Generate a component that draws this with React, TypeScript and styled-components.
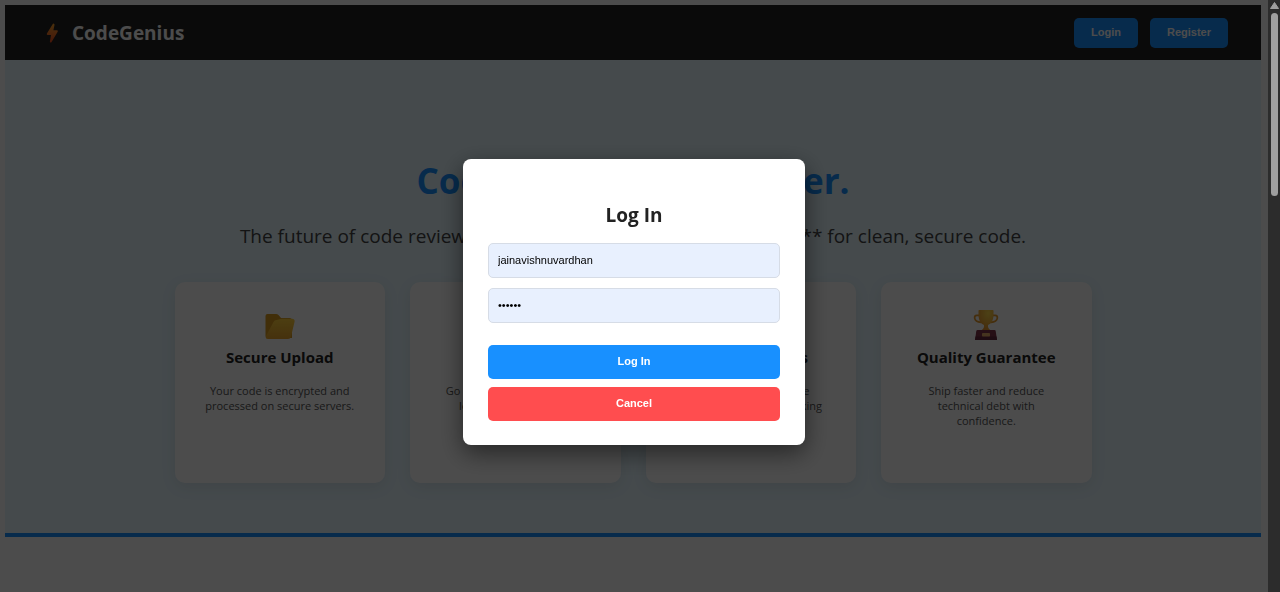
import React from "react";
import styled, { createGlobalStyle } from "styled-components";

const GlobalStyle = createGlobalStyle`
  * { box-sizing: border-box; }
  body {
    margin: 0;
    background: #ffffff;
    color: #222222;
    font-family: "Segoe UI", "Open Sans", "Noto Sans", sans-serif;
  }
  h1, h2, h3, p { margin: 0; }
`;

const BLUE = "#1890ff";

const Shell = styled.div`
  display: flex;
  min-height: 100vh;
`;

const Page = styled.div`
  flex: 1;
  min-width: 0;
  padding: 5px 7px 0 5px;
`;

const Header = styled.header`
  display: flex;
  align-items: center;
  justify-content: space-between;
  height: 55px;
  padding: 0 33px 0 40px;
  background: #222222;
`;

const Brand = styled.a`
  display: flex;
  align-items: center;
  gap: 12px;
  color: #ffffff;
  font-size: 19px;
  font-weight: 700;
  line-height: 28px;
  text-decoration: none;
`;

const Nav = styled.nav`
  display: flex;
  gap: 12px;
`;

const Button = styled.button<{ $tone?: "danger"; $block?: boolean }>`
  width: ${(p) => (p.$block ? "100%" : "auto")};
  height: ${(p) => (p.$block ? "34px" : "30px")};
  padding: 0 17px 2px;
  border: 0;
  border-radius: 5px;
  background: ${(p) => (p.$tone === "danger" ? "#ff4d4f" : BLUE)};
  color: #ffffff;
  font-family: "Liberation Sans", Arial, sans-serif;
  font-size: 11px;
  font-weight: 700;
  cursor: pointer;
`;

const Hero = styled.section`
  padding: 96px 40px 50px;
  border-bottom: 4px solid ${BLUE};
  background: #e6f7ff;
  text-align: center;
`;

const Title = styled.h1`
  color: ${BLUE};
  font-size: 35px;
  font-weight: 700;
  line-height: 50px;
`;

const Subtitle = styled.p`
  margin-top: 16px;
  color: #444444;
  font-size: 19px;
  line-height: 28px;
  white-space: nowrap;
`;

const Cards = styled.div`
  display: grid;
  grid-template-columns: repeat(4, 1fr);
  gap: 25px;
  max-width: 917px;
  margin: 32px auto 0;
`;

const Card = styled.article`
  display: flex;
  flex-direction: column;
  align-items: center;
  min-height: 201px;
  padding: 25px 28px;
  border-radius: 10px;
  background: #ffffff;
  box-shadow: 0 4px 16px rgba(0, 0, 0, 0.08);
`;

const CardTitle = styled.h3`
  margin-top: 4px;
  font-size: 15px;
  font-weight: 700;
  line-height: 24px;
  white-space: nowrap;
`;

const CardText = styled.p`
  margin-top: 14px;
  color: #555555;
  font-size: 11px;
  line-height: 15px;
`;

const Backdrop = styled.div`
  position: fixed;
  inset: 0 12px 0 0;
  display: flex;
  align-items: center;
  justify-content: center;
  padding-top: 12px;
  background: rgba(0, 0, 0, 0.7);
`;

const Dialog = styled.form`
  display: flex;
  flex-direction: column;
  width: 342px;
  padding: 40px 25px 24px;
  border-radius: 8px;
  background: #ffffff;
  box-shadow: 0 8px 24px rgba(0, 0, 0, 0.5);
`;

const DialogTitle = styled.h2`
  margin-bottom: 12px;
  font-size: 19px;
  font-weight: 700;
  line-height: 32px;
  text-align: center;
`;

const Field = styled.input`
  width: 100%;
  height: 35px;
  margin-bottom: 10px;
  padding: 0 9px 2px;
  border: 1px solid #d6dce6;
  border-radius: 5px;
  background: #e8f0fe;
  color: #000000;
  font-family: "Liberation Sans", Arial, sans-serif;
  font-size: 11px;
`;

const Actions = styled.div`
  display: flex;
  flex-direction: column;
  gap: 8px;
  margin-top: 12px;
`;

const ScrollTrack = styled.div`
  position: sticky;
  top: 0;
  display: flex;
  flex-direction: column;
  align-items: center;
  gap: 4px;
  width: 12px;
  height: 100vh;
  padding: 2px 0 0 1px;
  background: #2c2c2c;
`;

const ScrollThumb = styled.div`
  width: 7px;
  height: 183px;
  border-radius: 4px;
  background: #9f9f9f;
`;

const BoltIcon = () => (
  <svg width="15" height="22" viewBox="0 0 15 22" aria-hidden="true">
    <defs>
      <linearGradient id="bolt" x1="0" y1="0" x2="0" y2="1">
        <stop offset="0" stopColor="#f9a32c" />
        <stop offset="1" stopColor="#ed4e22" />
      </linearGradient>
    </defs>
    <path
      d="M7.6 2.2Q8 1.4 8.9 1.7Q9.7 2 9.5 2.9L8.4 8.2H12Q13.4 8.4 12.7 9.7L6.6 20Q6.1 20.8 5.3 20.4Q4.8 20.1 4.9 19.4L6 13H2.6Q1.3 12.8 1.9 11.5Z"
      fill="url(#bolt)"
    />
  </svg>
);

const FolderIcon = () => (
  <svg width="32" height="34" viewBox="0 0 32 34" aria-hidden="true">
    <defs>
      <linearGradient id="folder" x1="0" y1="0" x2="0" y2="1">
        <stop offset="0" stopColor="#ffd03b" />
        <stop offset="1" stopColor="#e9a42c" />
      </linearGradient>
    </defs>
    <path d="M1.5 9Q1.5 7 3.5 7H12Q13.5 7 14.5 8L17 11H25.5Q28 11 28 13.5V31H3.5Q1.5 31 1.5 29Z" fill="#d99a20" />
    <path d="M9.5 15Q10.3 13 12.5 13L17.5 11.8H28Q31.3 12 30.5 15L27 29.5Q26.4 32 24 32H4Q1 32 2 29Z" fill="url(#folder)" />
  </svg>
);

const TrophyIcon = () => (
  <svg width="32" height="34" viewBox="0 0 32 34" aria-hidden="true">
    <defs>
      <radialGradient id="cup" cx="0.65" cy="0.15" r="0.9">
        <stop offset="0" stopColor="#ffd94a" />
        <stop offset="1" stopColor="#e8912b" />
      </radialGradient>
    </defs>
    <path
      d="M9.5 8.3H6.8Q4.3 8.5 4.7 11.2Q5.4 15 11 15.4M22.5 8.3H25.2Q27.7 8.5 27.3 11.2Q26.6 15 21 15.4"
      fill="none"
      stroke="#e79a2c"
      strokeWidth="1.8"
    />
    <path d="M8.5 3.7Q8.5 3 9.3 3H22.7Q23.5 3 23.5 3.7V9Q23 16 18 18V20Q18.5 22 21 23.5H11Q13.5 22 14 20V18Q9 16 8.5 9Z" fill="url(#cup)" />
    <path d="M7.5 23H24.5Q25.5 23 25.7 24L27 33H5L6.3 24Q6.5 23 7.5 23Z" fill="#803348" />
    <path d="M5.6 29.5H26.5L27 33H5Z" fill="#65283c" />
    <rect x="12" y="26" width="8" height="3.5" rx="0.7" fill="#e7ad68" />
  </svg>
);

const SearchIcon = () => (
  <svg width="32" height="34" viewBox="0 0 32 34" aria-hidden="true">
    <circle cx="14" cy="15" r="9" fill="#bfe6fb" stroke="#4c5560" strokeWidth="3" />
    <path d="M21 22L28 30" stroke="#4c5560" strokeWidth="4" />
  </svg>
);

const ChartIcon = () => (
  <svg width="32" height="34" viewBox="0 0 32 34" aria-hidden="true">
    <path d="M6 31V20M14 31V13M22 31V7" stroke="#8593a0" strokeWidth="5" />
  </svg>
);

const features = [
  { icon: <FolderIcon />, title: "Secure Upload", text: "Your code is encrypted and processed on secure servers." },
  { icon: <SearchIcon />, title: "Deep Analysis", text: "Go beyond linting to detect logic errors and flaws." },
  { icon: <ChartIcon />, title: "Clean Analytics", text: "Resolve any code issue automatically while tracking" },
  { icon: <TrophyIcon />, title: "Quality Guarantee", text: "Ship faster and reduce technical debt with confidence." },
];

export default function App() {
  return (
    <>
      <GlobalStyle />
      <Shell>
        <Page>
          <Header>
            <Brand href="#">
              <BoltIcon />
              CodeGenius
            </Brand>
            <Nav>
              <Button type="button">Login</Button>
              <Button type="button">Register</Button>
            </Nav>
          </Header>
          <Hero>
            <Title>Code Better, Not Harder.</Title>
            <Subtitle>
              The future of code review is here. **Powered by Google Gemini** for clean, secure code.
            </Subtitle>
            <Cards>
              {features.map((f) => (
                <Card key={f.title}>
                  {f.icon}
                  <CardTitle>{f.title}</CardTitle>
                  <CardText>{f.text}</CardText>
                </Card>
              ))}
            </Cards>
          </Hero>
        </Page>
        <ScrollTrack aria-hidden="true">
          <svg width="9" height="7" viewBox="0 0 9 7">
            <path d="M4.5 0.5L8.5 6.5H0.5Z" fill="#9f9f9f" stroke="#9f9f9f" strokeLinejoin="round" />
          </svg>
          <ScrollThumb />
        </ScrollTrack>
      </Shell>
      <Backdrop>
        <Dialog role="dialog" aria-labelledby="login-title" onSubmit={(e) => e.preventDefault()}>
          <DialogTitle id="login-title">Log In</DialogTitle>
          <Field aria-label="Username" type="text" defaultValue="jainavishnuvardhan" />
          <Field aria-label="Password" type="password" defaultValue="secret" />
          <Actions>
            <Button type="submit" $block>Log In</Button>
            <Button type="button" $block $tone="danger">Cancel</Button>
          </Actions>
        </Dialog>
      </Backdrop>
    </>
  );
}
